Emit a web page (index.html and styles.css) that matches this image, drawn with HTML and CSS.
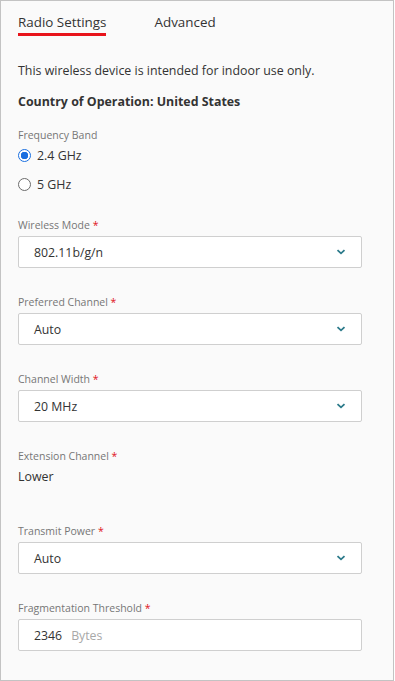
FILE: index.html
```html
<!DOCTYPE html>
<html lang="en">
  <head>
    <meta charset="UTF-8" />
    <meta name="viewport" content="width=device-width, initial-scale=1.0" />
    <title>Radio Settings</title>
    <link rel="stylesheet" href="styles.css">
  </head>
  <body>
    <div class="panel">
      <div class="tabs">
        <div class="tab active">Radio Settings</div>
        <div class="tab">Advanced</div>
      </div>

      <p class="note">This wireless device is intended for indoor use only.</p>
      <p class="country">Country of Operation: United States</p>

      <div class="band">
        <div class="label">Frequency Band</div>
        <label class="radio-row">
          <span class="radio checked"></span>
          <span>2.4 GHz</span>
        </label>
        <label class="radio-row">
          <span class="radio"></span>
          <span>5 GHz</span>
        </label>
      </div>

      <div class="field">
        <div class="label">Wireless Mode <span class="req">*</span></div>
        <div class="select">
          <span>802.11b/g/n</span>
          <svg class="chev" width="10" height="6" viewBox="0 0 10 6"><path d="M1.5 1.2l3.5 3.2 3.5-3.2" fill="none" stroke="#2b7a8a" stroke-width="1.8"/></svg>
        </div>
      </div>

      <div class="field">
        <div class="label">Preferred Channel <span class="req">*</span></div>
        <div class="select">
          <span>Auto</span>
          <svg class="chev" width="10" height="6" viewBox="0 0 10 6"><path d="M1.5 1.2l3.5 3.2 3.5-3.2" fill="none" stroke="#2b7a8a" stroke-width="1.8"/></svg>
        </div>
      </div>

      <div class="field">
        <div class="label">Channel Width <span class="req">*</span></div>
        <div class="select">
          <span>20 MHz</span>
          <svg class="chev" width="10" height="6" viewBox="0 0 10 6"><path d="M1.5 1.2l3.5 3.2 3.5-3.2" fill="none" stroke="#2b7a8a" stroke-width="1.8"/></svg>
        </div>
      </div>

      <div class="field">
        <div class="label">Extension Channel <span class="req">*</span></div>
        <div class="static">Lower</div>
      </div>

      <div class="field">
        <div class="label">Transmit Power <span class="req">*</span></div>
        <div class="select">
          <span>Auto</span>
          <svg class="chev" width="10" height="6" viewBox="0 0 10 6"><path d="M1.5 1.2l3.5 3.2 3.5-3.2" fill="none" stroke="#2b7a8a" stroke-width="1.8"/></svg>
        </div>
      </div>

      <div class="field">
        <div class="label">Fragmentation Threshold <span class="req">*</span></div>
        <div class="select input">
          <span>2346</span>
          <span class="unit">Bytes</span>
        </div>
      </div>
    </div>
  </body>
</html>
```

FILE: styles.css
```css
  body {
    margin: 0;
    background: #fff;
    font-family: "Open Sans", "Noto Sans", sans-serif;
    color: #333;
  }

  .panel {
    box-sizing: border-box;
    width: 394px;
    height: 681px;
    border: 1px solid #c3c3c3;
    background: #fafafa;
    padding: 0 17px;
  }

  .tabs {
    display: flex;
    gap: 48px;
    padding-top: 11px;
  }

  .tab {
    font-size: 13.4px;
    line-height: 20px;
    color: #333;
    padding-bottom: 1px;
    border-bottom: 3px solid transparent;
  }

  .tab.active {
    border-bottom-color: #e8141b;
  }

  .note {
    margin: 26px 0 0;
    font-size: 12.4px;
    line-height: 18px;
  }

  .country {
    margin: 13px 0 0;
    font-size: 12.4px;
    line-height: 18px;
    font-weight: 700;
  }

  .band {
    margin-top: 17px;
  }

  .label {
    font-size: 10.5px;
    line-height: 14px;
    color: #767676;
    margin-bottom: 4px;
  }

  .band .label {
    margin-bottom: 1px;
  }

  .req {
    color: #e0141b;
  }

  .radio-row {
    display: flex;
    align-items: center;
    gap: 6px;
    height: 24px;
    font-size: 12.4px;
  }

  .radio-row + .radio-row {
    margin-top: 5px;
  }

  .radio {
    box-sizing: border-box;
    width: 13px;
    height: 13px;
    border-radius: 50%;
    border: 1px solid #6b6b6b;
    background: #fff;
  }

  .radio.checked {
    border: 1px solid #1a6fe0;
    background: radial-gradient(circle, #1a6fe0 0 3.5px, #fff 4px);
  }

  .field {
    margin-top: 27px;
  }

  .band + .field {
    margin-top: 22px;
  }

  .select {
    box-sizing: border-box;
    width: 344px;
    height: 32px;
    border: 1px solid #cfcfcf;
    border-radius: 2px;
    background: #fff;
    display: flex;
    align-items: center;
    justify-content: space-between;
    padding: 0 15px 0 15px;
    font-size: 12.3px;
  }

  .chev {
    display: block;
  }

  .input {
    justify-content: flex-start;
    gap: 9px;
  }

  .unit {
    color: #a8a8a8;
  }

  .static {
    height: 30px;
    font-size: 12.4px;
    line-height: 20px;
  }
```
